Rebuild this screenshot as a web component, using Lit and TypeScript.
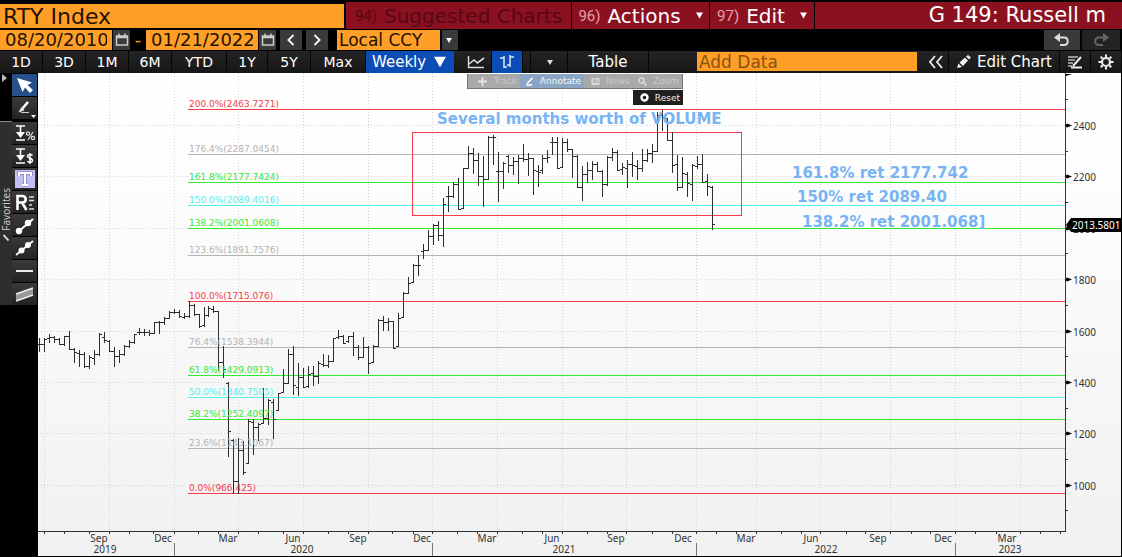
import { LitElement, html, svg, css } from "lit";
import { customElement, state } from "lit/decorators.js";

type Bar = [high: number, low: number, open: number, close: number];

const LEFT = 38;
const TOP = 73;
const PLOT_RIGHT = 1065;
const PLOT_BOTTOM = 531;
const FIRST_BAR = 39;
const BAR_STEP = 4.985;

const BARS: Bar[] = [
  [338, 351, 344, 344], [338, 351, 344, 339], [334, 342, 338, 337], [336, 342, 337, 339],
  [338, 344, 339, 344], [336, 345, 344, 336], [331, 349, 336, 349], [348, 362, 349, 352],
  [350, 366, 353, 354], [352, 367, 354, 366], [355, 368, 366, 357], [350, 364, 358, 354],
  [333, 355, 354, 334], [332, 342, 337, 340], [340, 351, 341, 351], [347, 366, 351, 356],
  [350, 362, 356, 354], [345, 355, 354, 346], [340, 347, 346, 342], [334, 343, 342, 334],
  [328, 334, 332, 332], [329, 335, 332, 332], [330, 335, 332, 333], [322, 333, 333, 322],
  [321, 333, 322, 322], [317, 324, 322, 318], [311, 318, 318, 312], [309, 313, 312, 312],
  [310, 317, 312, 316], [313, 318, 317, 316], [301, 317, 316, 305], [304, 315, 305, 314],
  [314, 327, 314, 326], [307, 326, 325, 315], [306, 316, 315, 308], [306, 312, 309, 311],
  [311, 370, 311, 362], [346, 377, 362, 369], [382, 456, 383, 431], [439, 493, 440, 481],
  [438, 493, 481, 450], [441, 474, 450, 472], [419, 463, 463, 421], [419, 454, 422, 427],
  [423, 440, 427, 424], [388, 423, 423, 418], [399, 424, 418, 400], [399, 438, 402, 419],
  [393, 410, 410, 393], [369, 392, 392, 383], [349, 383, 383, 354], [346, 394, 354, 385],
  [363, 395, 387, 377], [368, 387, 377, 387], [366, 387, 386, 374], [366, 385, 373, 376],
  [361, 383, 376, 363], [354, 366, 364, 365], [355, 367, 365, 361], [338, 361, 361, 338],
  [330, 338, 337, 336], [335, 343, 336, 343], [336, 342, 341, 336], [332, 355, 336, 347],
  [345, 359, 347, 357], [337, 357, 357, 347], [346, 373, 347, 363], [345, 362, 362, 346],
  [319, 346, 346, 320], [316, 330, 320, 322], [318, 330, 322, 321], [321, 348, 321, 348],
  [313, 346, 346, 318], [292, 317, 317, 293], [277, 293, 293, 283], [264, 282, 282, 265],
  [255, 275, 265, 265], [244, 258, 251, 250], [230, 250, 250, 236], [224, 244, 236, 225],
  [221, 240, 225, 235], [198, 246, 235, 204], [186, 211, 196, 196], [182, 197, 196, 184],
  [178, 209, 184, 209], [168, 208, 208, 168], [146, 168, 168, 153], [148, 173, 153, 160],
  [153, 185, 160, 176], [156, 206, 176, 179], [136, 179, 179, 137], [135, 164, 137, 137],
  [152, 201, 171, 171], [162, 188, 171, 163], [155, 172, 156, 165], [157, 174, 165, 161],
  [155, 183, 161, 158], [144, 161, 158, 159], [153, 175, 159, 158], [158, 194, 158, 170],
  [165, 186, 171, 172], [155, 173, 170, 158], [150, 162, 158, 157], [137, 154, 142, 142],
  [137, 168, 142, 168], [138, 167, 167, 142], [139, 151, 142, 149], [149, 177, 149, 156],
  [155, 187, 156, 187], [166, 200, 187, 174], [162, 182, 174, 170], [161, 179, 170, 164],
  [162, 171, 164, 171], [170, 196, 171, 184], [156, 185, 184, 157], [148, 160, 157, 152],
  [150, 170, 152, 170], [163, 174, 169, 167], [160, 187, 168, 164], [152, 176, 164, 165],
  [160, 179, 166, 168], [149, 171, 168, 160], [149, 161, 160, 153], [144, 162, 153, 151],
  [112, 151, 151, 115], [110, 130, 115, 117], [118, 140, 118, 140], [132, 172, 140, 165],
  [155, 190, 164, 187], [157, 187, 187, 173], [172, 196, 174, 183], [164, 200, 184, 165],
  [156, 168, 166, 164], [154, 182, 164, 182], [174, 195, 181, 186], [186, 229, 187, 224],
];

const RED = "#f53b46";
const GRAY = "#b4b4b4";
const GREEN = "#35e835";
const CYAN = "#55f0f0";

const LEVELS: { label: string; y: number; color: string }[] = [
  { label: "200.0%(2463.7271)", y: 109, color: RED },
  { label: "176.4%(2287.0454)", y: 154, color: GRAY },
  { label: "161.8%(2177.7424)", y: 182, color: GREEN },
  { label: "150.0%(2089.4016)", y: 205, color: CYAN },
  { label: "138.2%(2001.0608)", y: 228, color: GREEN },
  { label: "123.6%(1891.7576)", y: 255, color: GRAY },
  { label: "100.0%(1715.076)", y: 301, color: RED },
  { label: "76.4%(1538.3944)", y: 347, color: GRAY },
  { label: "61.8%(1429.0913)", y: 375, color: GREEN },
  { label: "50.0%(1340.7505)", y: 397, color: CYAN },
  { label: "38.2%(1252.4097)", y: 419, color: GREEN },
  { label: "23.6%(1143.1067)", y: 448, color: GRAY },
  { label: "0.0%(966.425)", y: 493, color: RED },
];

const GRID_X = [44, 109, 174, 238, 303, 368, 432, 497, 562, 626, 696, 756, 820, 890, 955, 1020];
const TICKS_X = [
  44, 64, 89, 109, 129, 153, 174, 198, 218, 238, 258, 283, 303, 328, 348, 368, 392, 413, 432, 457,
  477, 497, 522, 542, 562, 587, 607, 626, 652, 672, 696, 716, 736, 756, 781, 801, 820, 846, 865,
  890, 911, 930, 955, 975, 996, 1020, 1040, 1060,
];
const YEAR_BREAKS = [174, 432, 696, 955];
const MONTHS: [string, number][] = [
  ["Sep", 99], ["Dec", 163], ["Mar", 228], ["Jun", 293], ["Sep", 358], ["Dec", 422], ["Mar", 487],
  ["Jun", 552], ["Sep", 616], ["Dec", 683], ["Mar", 746], ["Jun", 811], ["Sep", 878], ["Dec", 943],
  ["Mar", 1007],
];
const YEARS: [string, number][] = [
  ["2019", 105], ["2020", 302], ["2021", 564], ["2022", 826], ["2023", 1010],
];
const PRICES = [2400, 2200, 2000, 1800, 1600, 1400, 1200, 1000];
const NOTES: [string, number, number][] = [
  ["Several months worth of VOLUME", 437, 124],
  ["161.8% ret 2177.742", 792, 178],
  ["150% ret 2089.40", 797, 202],
  ["138.2% ret 2001.068]", 802, 227],
];

const priceY = (p: number) => Math.round(125 + (2400 - p) * 0.2569);

@customElement("price-chart")
export class PriceChart extends LitElement {
  static styles = css`
    :host { display: block; }
    svg { display: block; width: 100%; height: auto; }
    .grid { stroke: #d4d4d6; stroke-dasharray: 1 2; fill: none; }
    .axis { stroke: #333; fill: none; }
    .year-break { stroke: #777; }
    .bars { stroke: #2e2e2e; fill: none; }
    .level { font: 9px "DejaVu Sans", sans-serif; }
    .tick { font: 10px "Noto Sans", sans-serif; fill: #333; }
    .mid { text-anchor: middle; }
    .flag { font: 10px "Noto Sans", sans-serif; fill: #fff; }
    .note { font: bold 15px "DejaVu Sans", sans-serif; fill: #78b4f4; }
    .crisp { shape-rendering: crispEdges; }
  `;

  private barPath() {
    return BARS.map(([h, l, o, c], i) => {
      const x = Math.round(FIRST_BAR + i * BAR_STEP) + 0.5;
      return `M${x} ${h}V${l + 1}M${x - 2.5} ${o + 0.5}H${x}M${x} ${c + 0.5}H${x + 2.5}`;
    }).join("");
  }

  render() {
    const gridPath =
      GRID_X.map((x) => `M${x + 0.5} ${TOP}V${PLOT_BOTTOM}`).join("") +
      PRICES.map((p) => `M${LEFT} ${priceY(p) + 0.5}H${PLOT_RIGHT}`).join("");
    const minor = [2500, 2300, 2100, 1900, 1700, 1500, 1300, 1100, 900];
    return html`
      <svg viewBox="38 73 1083 483" role="img" aria-label="RTY Index weekly price chart">
        <defs>
          <linearGradient id="paper" x1="0" y1="0" x2="0" y2="1">
            <stop offset="0" stop-color="#ffffff" />
            <stop offset="0.3" stop-color="#fcfcfc" />
            <stop offset="1" stop-color="#f1f1f1" />
          </linearGradient>
        </defs>
        <rect x="38" y="73" width="1083" height="483" fill="url(#paper)" />
        <g class="crisp">
          <path class="grid" d=${gridPath} />
          ${LEVELS.map((v) => svg`<rect x="188" y="${v.y}" width="877" height="1" fill="${v.color}"></rect>`)}
          <rect x="412.5" y="132.5" width="329" height="83" fill="none" stroke="${RED}" />
          <path class="bars" d=${this.barPath()} />
          <path class="axis" d="M38 531.5H1065.5V73" />
          <path class="axis" d=${TICKS_X.map((x) => `M${x + 0.5} 531V534`).join("")} />
          <path class="axis" d=${minor.map((p) => `M1065 ${priceY(p) + 0.5}H1068`).join("")} />
          <path class="year-break" d=${YEAR_BREAKS.map((x) => `M${x + 0.5} 543V556`).join("")} />
        </g>
        <path d="M1066 74H1072L1066 76Z" />
        ${PRICES.map((p) => {
          const y = priceY(p) + 0.5;
          return svg`
            <path d="M1066 ${y - 1}L1067 ${y - 2}L1072 ${y}L1067 ${y + 2}L1066 ${y + 1}Z" />
            <text class="tick" x="1073" y=${y + 4}>${p}</text>`;
        })}
        ${MONTHS.map(([m, x]) => svg`<text class="tick mid" x=${x} y="542">${m}</text>`)}
        ${YEARS.map(([m, x]) => svg`<text class="tick mid" x=${x} y="553">${m}</text>`)}
        ${LEVELS.map((v) => svg`<text class="level" x="189" y=${v.y - 2} fill=${v.color}>${v.label}</text>`)}
        ${NOTES.map(([t, x, y]) => svg`<text class="note" x=${x} y=${y}>${t}</text>`)}
        <path d="M1066 225L1071 218H1121V232H1071Z" />
        <text class="flag" x="1072" y="229">2013.5801</text>
      </svg>
    `;
  }
}

const down = html`<svg class="down" viewBox="0 0 8 7" width="8" height="7" aria-hidden="true"><path d="M0 0H8L4 7Z" fill="currentColor" /></svg>`;
const calendar = html`<svg viewBox="0 0 14 13" width="14" height="13" aria-hidden="true"><path d="M1.500 3H12.500V12H1.500ZM1 4.500H13M4 0.500V3M10 0.500V3" fill="none" stroke="#ccc" stroke-width="1.500" /></svg>`;

const TOOLS: { name: string; art: unknown }[] = [
  { name: "Percent change", art: svg`<path d="M3 4H12M7.500 4V13M3 18H12" stroke="#fff" stroke-width="1.600" fill="none"/><path d="M3 10H12L7.500 16Z" fill="#fff"/><g fill="none" stroke="#ddd" stroke-width="1.200"><circle cx="15" cy="11.500" r="1.600"/><circle cx="20" cy="16" r="1.600"/><path d="M20 10L15 18"/></g>` },
  { name: "Dollar change", art: svg`<path d="M3 4H12M7.500 4V13M3 18H12" stroke="#fff" stroke-width="1.600" fill="none"/><path d="M3 10H12L7.500 16Z" fill="#fff"/><path d="M19.500 10.500C18 9 14.500 9.300 14.500 11.300C14.500 14 19.500 12.500 19.500 15.500C19.500 17.500 16 17.800 14.300 16.200M17 8V19" fill="none" stroke="#fff" stroke-width="1.500"/>` },
  { name: "Text", art: svg`<rect x="2" y="2" width="20" height="18" fill="#c3bff2"/><path d="M6 8V5H18V8M12 5V17M9 17H15" fill="none" stroke="#8e8acb" stroke-width="3.600"/><path d="M6 8V5H18V8M12 5V17M9 17H15" fill="none" stroke="#fff" stroke-width="2"/>` },
  { name: "Regression", art: svg`<path d="M4.500 19V5H9C14 5 14 11.500 9 11.500H5M9 11.500L13.500 19" fill="none" stroke="#fff" stroke-width="2.600"/><path d="M16 6H21M16 9.500H21M16 14H19M16 18H21" stroke="#ddd" stroke-width="1.400"/>` },
  { name: "Segment", art: svg`<path d="M5 18L20 5" stroke="#fff" stroke-width="2"/><circle cx="6" cy="17" r="3.200" fill="#fff"/><circle cx="15" cy="9" r="3.200" fill="#fff"/>` },
  { name: "Trend line", art: svg`<path d="M3 18L20 4" stroke="#fff" stroke-width="1.800"/><circle cx="8.500" cy="13.500" r="3" fill="#fff"/><circle cx="15" cy="8" r="3" fill="#fff"/>` },
  { name: "Horizontal line", art: svg`<path d="M3 11H20" stroke="#fff" stroke-width="1.800"/>` },
  { name: "Channel", art: svg`<path d="M3 11L20 5V12L3 18Z" fill="#999"/><path d="M3 11L20 5M3 18L20 12" stroke="#eee" stroke-width="1.800"/>` },
];

@customElement("app-root")
export class AppRoot extends LitElement {
  @state() private range = "";

  static styles = css`
    :host { display: block; min-height: 100vh; background: #000; color: #fff; font-family: "DejaVu Sans", sans-serif; }
    * { box-sizing: border-box; }
    button, input, select { font-family: inherit; border: 0; border-radius: 0; margin: 0; padding: 0; color: inherit; outline: none; }
    button { cursor: pointer; display: flex; align-items: center; justify-content: center; background: none; white-space: nowrap; font-size: 15px; }
    select { appearance: none; }
    svg { display: block; flex: none; }
    .amber { background: #ff9f28; color: #241200; }
    .title-row { display: flex; height: 29px; padding-top: 2px; gap: 1px; }
    .ticker { flex: 0 0 344px; height: 24px; margin: 2px 1px 0 0; padding: 0 3px; font-size: 22px; }
    .menu { background: #8b1020; height: 27px; font-size: 20px; gap: 7px; }
    .menu .num { font: 15px Roboto, sans-serif; color: #e7a0aa; }
    .menu .down { width: 7px; margin-left: 8px; }
    .suggested { flex: 0 0 225px; color: #540914; }
    .suggested .num { color: #540914; }
    .actions { flex: 0 0 137px; }
    .edit { flex: 0 0 104px; }
    .heading { flex: 1; min-width: 0; margin: 0; padding-right: 16px; font-size: 21px; font-weight: normal; line-height: 27px; text-align: right; background: #8b1020; white-space: nowrap; }
    .date-row { display: flex; align-items: center; height: 22px; padding: 0 2px 1px 0; }
    .date { width: 112px; height: 20px; padding: 0 5px; font-size: 18px; }
    .dash { width: 16px; text-align: center; color: #ff9f28; font-size: 18px; line-height: 20px; }
    .key { background: #3a3a3a; height: 20px; }
    .cal { width: 17px; margin-left: 1px; }
    .step { width: 22px; margin-left: 4px; }
    .picker { position: relative; display: flex; }
    .picker .down { position: absolute; right: 6px; top: 8px; width: 6px; height: 5px; pointer-events: none; }
    .currency { margin-left: 9px; }
    .currency select { width: 121px; height: 20px; padding-left: 2px; font-size: 17px; color: #241200; background: linear-gradient(90deg, #ff9f28 103px, #000 103px, #000 105px, #3a3a3a 105px); }
    .undo { width: 36px; margin-left: auto; }
    .redo { width: 38px; margin-left: 2px; background: #232323; }
    .tool-row { display: flex; align-items: stretch; height: 22px; background: linear-gradient(#242424, #161616); font-size: 15px; }
    .tool-row button { border-right: 1px solid #060606; }
    .range { width: 43px; font-size: 14px; }
    .range.wide { width: 55px; }
    .range.thin { width: 41px; }
    .range.on { color: #ffb04c; }
    .weekly select { width: 88px; padding-left: 6px; font-size: 15px; background: #0b4db4; color: #fff; }
    .weekly .down { right: 8px; top: 5px; width: 12px; height: 12px; }
    .line { width: 31px; margin-left: 7px; }
    .ohlc { width: 31px; background: #0b4db4; }
    .more { width: 38px; margin-left: 7px; border-left: 1px solid #060606; padding-left: 1px; }
    .table { width: 81px; }
    .add { flex: 1; min-width: 120px; height: 19px; margin: 1px 6px 0 48px; padding: 0 2px; font-size: 17px; }
    .add::placeholder { color: #8c520c; opacity: 1; }
    .fold { width: 26px; }
    .edit-chart { width: 111px; gap: 5px; }
    .icon { width: 31px; }
    .body { display: flex; align-items: flex-start; padding-right: 1px; }
    .side { display: flex; flex: 0 0 38px; }
    .gutter { width: 12px; display: flex; flex-direction: column; }
    .expand { width: 12px; height: 48px; align-items: flex-start; justify-content: flex-start; padding: 1px 0 0 2px; }
    .favorites { flex: 1; display: flex; align-items: center; justify-content: flex-start; gap: 3px; padding: 66px 0 0 0; flex-direction: column; background: #2e2e2e; border-top: 1px solid #888; color: #ccc; font: 10px "Noto Sans", sans-serif; }
    .favorites span { writing-mode: vertical-rl; transform: rotate(180deg); line-height: 12px; }
    .tools { width: 26px; display: flex; flex-direction: column; gap: 1px; padding-top: 1px; }
    .tool { width: 25px; height: 22px; background: linear-gradient(#3a3a3a, #232323); }
    .tool.active { background: #27508a; }
    .tool.pen { margin-bottom: 2px; }
    .chart { position: relative; flex: 1; min-width: 0; }
    .float { position: absolute; left: 429px; top: 1px; display: flex; flex-direction: column; align-items: flex-end; gap: 1px; }
    .modes { display: flex; height: 15px; border: 1px solid #777; border-top: 0; background: #a9a9a9; }
    .modes button, .reset { font-size: 9px; gap: 6px; justify-content: flex-end; padding-right: 3px; }
    .modes button { color: #c9c9c9; }
    .modes .mode-track { width: 52px; }
    .modes .mode-annotate { width: 64px; background: #8ba6c4; color: #f4f8fc; }
    .modes .mode-news { width: 49px; }
    .modes .mode-zoom { width: 49px; }
    .reset { width: 50px; height: 15px; background: #1f1f1f; color: #eee; }
  `;

  private rangeButton(label: string, size = "") {
    return html`<button
      class="range ${size} ${this.range === label ? "on" : ""}"
      @click=${() => (this.range = label)}
    >${label}</button>`;
  }

  render() {
    return html`
      <header>
        <div class="title-row">
          <input class="ticker amber" aria-label="Security" value="RTY Index" />
          <button class="menu suggested"><span class="num">94)</span>Suggested Charts</button>
          <button class="menu actions"><span class="num">96)</span>Actions ${down}</button>
          <button class="menu edit"><span class="num">97)</span>Edit ${down}</button>
          <h1 class="heading">G 149: Russell m</h1>
        </div>
        <div class="date-row">
          <input class="date amber" aria-label="Start date" value="08/20/2010" />
          <button class="key cal" aria-label="Pick start date">${calendar}</button>
          <span class="dash">-</span>
          <input class="date amber" aria-label="End date" value="01/21/2022" />
          <button class="key cal" aria-label="Pick end date">${calendar}</button>
          <button class="key step" aria-label="Previous period">
            <svg viewBox="0 0 10 12" width="10" height="12"><path d="M7.500 1L2.500 6L7.500 11" fill="none" stroke="#eee" stroke-width="2" /></svg>
          </button>
          <button class="key step" aria-label="Next period">
            <svg viewBox="0 0 10 12" width="10" height="12"><path d="M2.500 1L7.500 6L2.500 11" fill="none" stroke="#eee" stroke-width="2" /></svg>
          </button>
          <div class="picker currency">
            <select aria-label="Currency"><option>Local CCY</option></select>${down}
          </div>
          <button class="key undo" aria-label="Undo">
            <svg viewBox="0 0 18 14" width="18" height="14"><path d="M5 4.500H11C16 4.500 16 12 11 12H7" fill="none" stroke="#ddd" stroke-width="2" /><path d="M1 4.500L7 0V9Z" fill="#ddd" /></svg>
          </button>
          <button class="key redo" aria-label="Redo">
            <svg viewBox="0 0 18 14" width="18" height="14"><path d="M12 4.500H7C2 4.500 2 12 7 12H11" fill="none" stroke="#666" stroke-width="2" /><path d="M17 4.500L11 0V9Z" fill="#666" /></svg>
          </button>
        </div>
        <div class="tool-row">
          ${this.rangeButton("1D")}${this.rangeButton("3D")}${this.rangeButton("1M")}${this.rangeButton("6M")}
          ${this.rangeButton("YTD", "wide")}${this.rangeButton("1Y", "thin")}${this.rangeButton("5Y")}${this.rangeButton("Max", "wide")}
          <div class="picker weekly"><select aria-label="Periodicity"><option>Weekly</option></select>${down}</div>
          <button class="line" aria-label="Line chart">
            <svg viewBox="0 0 18 14" width="18" height="14"><path d="M1.500 1V12.500H17" fill="none" stroke="#ddd" stroke-width="1.400" /><path d="M2 9L7 5L10.500 8L17 3" fill="none" stroke="#ddd" stroke-width="1.600" /></svg>
          </button>
          <button class="ohlc" aria-label="Bar chart">
            <svg viewBox="0 0 16 16" width="16" height="16"><path d="M5 2V14M1 4H5M5 13H8M11 1V13M8 11H11M11 3H15" fill="none" stroke="#dfe9fa" stroke-width="1.500" /></svg>
          </button>
          <button class="more" aria-label="More chart types"><svg viewBox="0 0 6 5" width="6" height="5"><path d="M0 0H6L3 5Z" fill="#ddd" /></svg></button>
          <button class="table">Table</button>
          <input class="add amber" aria-label="Add Data" placeholder="Add Data" />
          <button class="fold" aria-label="Collapse">
            <svg viewBox="0 0 16 14" width="16" height="14"><path d="M7 1L2 7L7 13M14 1L9 7L14 13" fill="none" stroke="#eee" stroke-width="1.800" /></svg>
          </button>
          <button class="edit-chart">
            <svg viewBox="0 0 16 14" width="16" height="14"><path d="M1 13L2.500 8.500L6 12ZM3.500 7.500L9 2.500L12 5.500L7 11ZM10 1.500L12 0L15 2.500L13 4.500Z" fill="#eee" /></svg>Edit Chart
          </button>
          <button class="icon" aria-label="Notes">
            <svg viewBox="0 0 16 14" width="16" height="14"><path d="M1 2H11M1 5H8M1 8H6M1 11H5" stroke="#bbb" stroke-width="1.500" /><path d="M14 2L6 11M4 12.500H15" stroke="#eee" stroke-width="2" /></svg>
          </button>
          <button class="icon" aria-label="Settings">
            <svg viewBox="0 0 16 16" width="16" height="16"><circle cx="8" cy="8" r="4" fill="none" stroke="#eee" stroke-width="2.200" /><path d="M8 0.500V3M8 13V15.500M0.500 8H3M13 8H15.500M2.700 2.700L4.500 4.500M11.500 11.500L13.300 13.300M2.700 13.300L4.500 11.500M11.500 4.500L13.300 2.700" stroke="#eee" stroke-width="2" /></svg>
          </button>
        </div>
      </header>
      <main class="body">
        <nav class="side" aria-label="Drawing tools">
          <div class="gutter">
            <button class="expand" aria-label="Expand"><svg viewBox="0 0 5 8" width="5" height="8"><path d="M0 0L5 4L0 8Z" fill="#bbb" /></svg></button>
            <button class="favorites"><span>Favorites</span>
              <svg viewBox="0 0 8 8" width="8" height="8"><path d="M1.500 1L6.500 6.500" stroke="#eee" stroke-width="1.800" /></svg>
            </button>
          </div>
          <div class="tools">
            <button class="tool active" aria-label="Select">
              <svg viewBox="0 0 24 22" width="24" height="22"><path d="M4 4L19 8.500L14.500 11L20 16L17 19L12 13.500L9.500 18Z" fill="#fff" /></svg>
            </button>
            <button class="tool pen" aria-label="Draw">
              <svg viewBox="0 0 24 22" width="24" height="22"><path d="M15 5L9 12" stroke="#fff" stroke-width="2.600" /><path d="M9 10L6 15L11 13ZM8 15.500H16" fill="#fff" stroke="#ccc" /><path d="M18 18H23L20.500 21Z" fill="#fff" /></svg>
            </button>
            ${TOOLS.map((t) => html`<button class="tool" aria-label=${t.name}><svg viewBox="0 0 24 22" width="24" height="22">${t.art}</svg></button>`)}
          </div>
        </nav>
        <section class="chart">
          <price-chart></price-chart>
          <div class="float">
            <div class="modes">
              <button class="mode-track"><svg viewBox="0 0 9 9" width="9" height="9"><path d="M4.500 0V9M0 4.500H9" stroke="#e6e6e6" stroke-width="1.800" /></svg>Track</button>
              <button class="mode-annotate"><svg viewBox="0 0 9 9" width="9" height="9"><path d="M7.500 1L2 6.500M1 8H7" stroke="#fff" stroke-width="1.600" /></svg>Annotate</button>
              <button class="mode-news"><svg viewBox="0 0 9 9" width="9" height="9"><path d="M0.500 1H8.500V8H0.500Z" fill="#d8d8d8" /><path d="M2 3H5M6 3H7.500M2 5H7.500" stroke="#999" /></svg>News</button>
              <button class="mode-zoom"><svg viewBox="0 0 9 9" width="9" height="9"><circle cx="3.500" cy="3.500" r="2.600" fill="none" stroke="#e0e0e0" stroke-width="1.300" /><path d="M5.500 5.500L8.500 8.500" stroke="#e0e0e0" stroke-width="1.600" /></svg>Zoom</button>
            </div>
            <button class="reset"><svg viewBox="0 0 9 9" width="9" height="9"><circle cx="4.500" cy="4.500" r="3" fill="none" stroke="#fff" stroke-width="2.400" /></svg>Reset</button>
          </div>
        </section>
      </main>
    `;
  }
}
